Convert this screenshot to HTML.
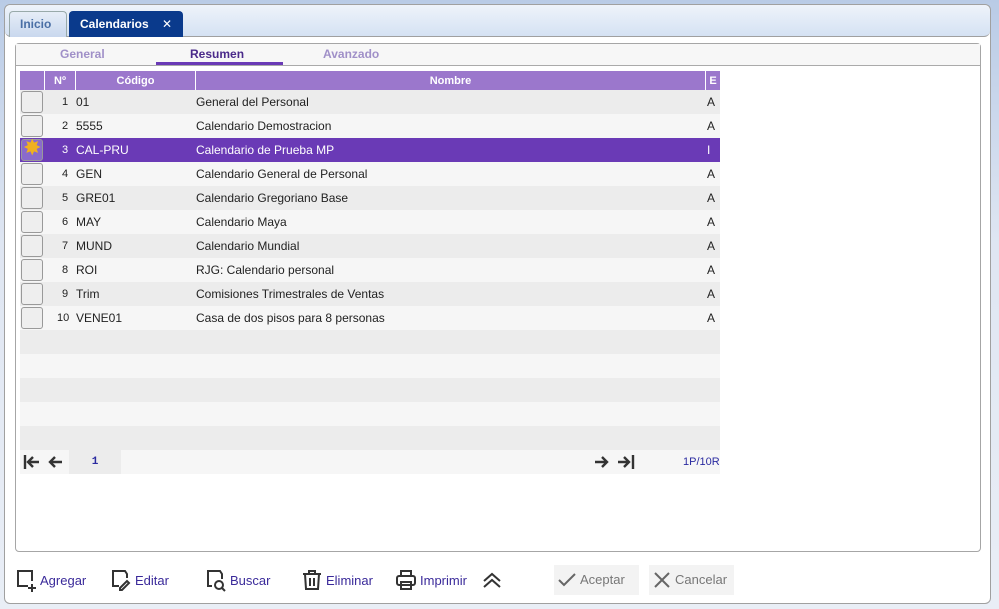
<!DOCTYPE html>
<html><head><meta charset="utf-8"><style>
*{box-sizing:border-box;margin:0;padding:0}
body{width:999px;height:609px;overflow:hidden;background:linear-gradient(#b9cbe6,#dfe6f2 40%,#e9eef6);font-family:"Liberation Sans","DejaVu Sans",sans-serif;position:relative}
.outer{position:absolute;left:4px;top:4px;width:987px;height:600px;border:1px solid #a0a0a0;border-radius:6px;background:#fff;overflow:hidden}
.tabbar{position:absolute;left:0;top:0;width:100%;height:32px;background:linear-gradient(#eef3fa,#d5e2f3);border-bottom:1px solid #a0a0a0;border-radius:6px 6px 6px 6px}
.tab{position:absolute;top:6px;height:26px;border:1px solid #9aa;border-bottom:none;border-radius:4px 4px 0 0;font-weight:bold;font-size:12px;line-height:24px;padding-left:10px}
.inner{position:absolute;left:10px;top:38px;width:966px;height:509px;border:1px solid #a6a6a6;border-radius:4px;background:#fff}
.subtabs{height:22px;background:#f7f7f7;border-bottom:1px solid #aaa;position:relative;font-size:12px;font-weight:bold;color:#a090c8}
.subtabs span{position:absolute;top:3px}
.grid{position:absolute;left:20px;top:71px;width:700px}
.row{height:24px;position:relative;font-size:12px;line-height:24px;color:#222}
.row span{position:absolute;top:0}
.hdr{height:19px;background:#9b77cc;color:#fff;font-weight:bold;font-size:11px;line-height:20px;position:relative}
.hdr span{position:absolute;top:0;border-left:1px solid #fff;height:19px;text-align:center}
.cb{position:absolute;left:1px;top:1px;width:22px;height:22px;border:1px solid #999;border-radius:3px;background:#eee}
.o{background:#ececec}.e{background:#f6f6f6}
.sel{background:#6a3ab6;color:#fff}
.n{font-size:11px}
.btn{position:absolute;top:573px;font-size:13px;color:#3a2a9a}
</style></head><body>
<div class="outer">
 <div class="tabbar"></div>
 <div class="tab" style="left:4px;width:58px;background:linear-gradient(#e6edf7,#c9d8ee);color:#4a6fa5">Inicio</div>
 <div class="tab" style="left:64px;width:114px;background:#0a3a8c;color:#fff;border-color:#0a3a8c">Calendarios <span style="position:absolute;left:92px">✕</span></div>
 <div class="inner">
  <div class="subtabs">
   <span style="left:44px">General</span>
   <span style="left:174px;color:#4a2a8a">Resumen</span>
   <span style="left:307px">Avanzado</span>
   <div style="position:absolute;left:140px;top:18px;width:127px;height:3px;background:#6a3ab6"></div>
  </div>
 </div>
</div>
<div class="grid">
 <div class="hdr"><span style="left:24px;width:31px">Nº</span><span style="left:55px;width:120px">Código</span><span style="left:175px;width:510px">Nombre</span><span style="left:685px;width:15px">E</span></div>
 <div class="row o"><div class="cb"></div><span class="n" style="left:42px">1</span><span style="left:56px">01</span><span style="left:176px">General del Personal</span><span style="left:687px">A</span></div>
 <div class="row e"><div class="cb"></div><span class="n" style="left:42px">2</span><span style="left:56px">5555</span><span style="left:176px">Calendario Demostracion</span><span style="left:687px">A</span></div>
 <div class="row sel"><div class="cb" style="background:#8a6acc"></div><span class="n" style="left:42px">3</span><span style="left:56px">CAL-PRU</span><span style="left:176px">Calendario de Prueba MP</span><span style="left:687px">I</span><span style="left:3px;top:-2px;color:#f0b020;font-size:22px">✸</span></div>
 <div class="row e"><div class="cb"></div><span class="n" style="left:42px">4</span><span style="left:56px">GEN</span><span style="left:176px">Calendario General de Personal</span><span style="left:687px">A</span></div>
 <div class="row o"><div class="cb"></div><span class="n" style="left:42px">5</span><span style="left:56px">GRE01</span><span style="left:176px">Calendario Gregoriano Base</span><span style="left:687px">A</span></div>
 <div class="row e"><div class="cb"></div><span class="n" style="left:42px">6</span><span style="left:56px">MAY</span><span style="left:176px">Calendario Maya</span><span style="left:687px">A</span></div>
 <div class="row o"><div class="cb"></div><span class="n" style="left:42px">7</span><span style="left:56px">MUND</span><span style="left:176px">Calendario Mundial</span><span style="left:687px">A</span></div>
 <div class="row e"><div class="cb"></div><span class="n" style="left:42px">8</span><span style="left:56px">ROI</span><span style="left:176px">RJG: Calendario personal</span><span style="left:687px">A</span></div>
 <div class="row o"><div class="cb"></div><span class="n" style="left:42px">9</span><span style="left:56px">Trim</span><span style="left:176px">Comisiones Trimestrales de Ventas</span><span style="left:687px">A</span></div>
 <div class="row e"><div class="cb"></div><span class="n" style="left:37px">10</span><span style="left:56px">VENE01</span><span style="left:176px">Casa de dos pisos para 8 personas</span><span style="left:687px">A</span></div>
 <div class="row o"></div><div class="row e"></div><div class="row o"></div><div class="row e"></div><div class="row o"></div>
 <div class="row e" style="color:#333">
  <svg style="position:absolute;left:3px;top:4px" width="18" height="16" fill="none" stroke="#333" stroke-width="2.4"><path d="M2 1v14M16 8H5M10 3L5 8l5 5"/></svg>
  <svg style="position:absolute;left:27px;top:4px" width="16" height="16" fill="none" stroke="#333" stroke-width="2.4"><path d="M15 8H3M8 3L3 8l5 5"/></svg>
  <span style="left:49px;width:52px;height:24px;background:#ececec;text-align:center;color:#2a2aa0;font-size:11px;font-weight:bold;font-family:'Liberation Mono',monospace">1</span>
  <svg style="position:absolute;left:574px;top:4px" width="16" height="16" fill="none" stroke="#333" stroke-width="2.4"><path d="M1 8h12M8 3l5 5-5 5"/></svg>
  <svg style="position:absolute;left:597px;top:4px" width="18" height="16" fill="none" stroke="#333" stroke-width="2.4"><path d="M16 1v14M1 8h11M7 3l5 5-5 5"/></svg>
  <span style="left:663px;font-size:11px;color:#2a2aa0">1P/10R</span></div>
</div>
<svg style="position:absolute;left:16px;top:569px" width="22" height="24" fill="none" stroke="#333" stroke-width="2"><path d="M12 17H2V2h14v10M16 15v8M12 19h8"/></svg>
<div class="btn" style="left:40px">Agregar</div>
<svg style="position:absolute;left:111px;top:569px" width="22" height="24" fill="none" stroke="#333" stroke-width="2"><path d="M8 17H2V2h12l2 3v4M9 19l7-7 2 2-7 7h-2z"/></svg>
<div class="btn" style="left:135px">Editar</div>
<svg style="position:absolute;left:206px;top:569px" width="22" height="24" fill="none" stroke="#333" stroke-width="2"><path d="M6 17H2V2h12l2 3v5"/><circle cx="13" cy="16" r="4"/><path d="M16 19l3 3"/></svg>
<div class="btn" style="left:230px">Buscar</div>
<svg style="position:absolute;left:302px;top:569px" width="20" height="22" fill="none" stroke="#333" stroke-width="2"><path d="M1 5h18M7 5V2h6v3M3 5l1 15h12l1-15M8 9v8M12 9v8"/></svg>
<div class="btn" style="left:326px">Eliminar</div>
<svg style="position:absolute;left:396px;top:569px" width="20" height="22" fill="none" stroke="#333" stroke-width="2"><rect x="1" y="7" width="18" height="9" rx="2"/><path d="M5 7V2h10v5M5 13h10v7H5z"/></svg>
<div class="btn" style="left:420px">Imprimir</div>
<svg style="position:absolute;left:482px;top:572px" width="20" height="16" fill="none" stroke="#333" stroke-width="2"><path d="M2 9l8-7 8 7M2 15l8-7 8 7"/></svg>
<div style="position:absolute;left:554px;top:565px;width:85px;height:30px;background:#f3f3f3;font-size:13px;color:#777;line-height:30px;padding-left:26px">Aceptar</div>
<svg style="position:absolute;left:557px;top:572px" width="20" height="16" fill="none" stroke="#666" stroke-width="2"><path d="M2 8l5 5L18 2"/></svg>
<div style="position:absolute;left:649px;top:565px;width:85px;height:30px;background:#f3f3f3;font-size:13px;color:#777;line-height:30px;padding-left:26px">Cancelar</div>
<svg style="position:absolute;left:653px;top:571px" width="18" height="18" fill="none" stroke="#666" stroke-width="2"><path d="M2 2l14 14M16 2L2 16"/></svg>
</body></html>
